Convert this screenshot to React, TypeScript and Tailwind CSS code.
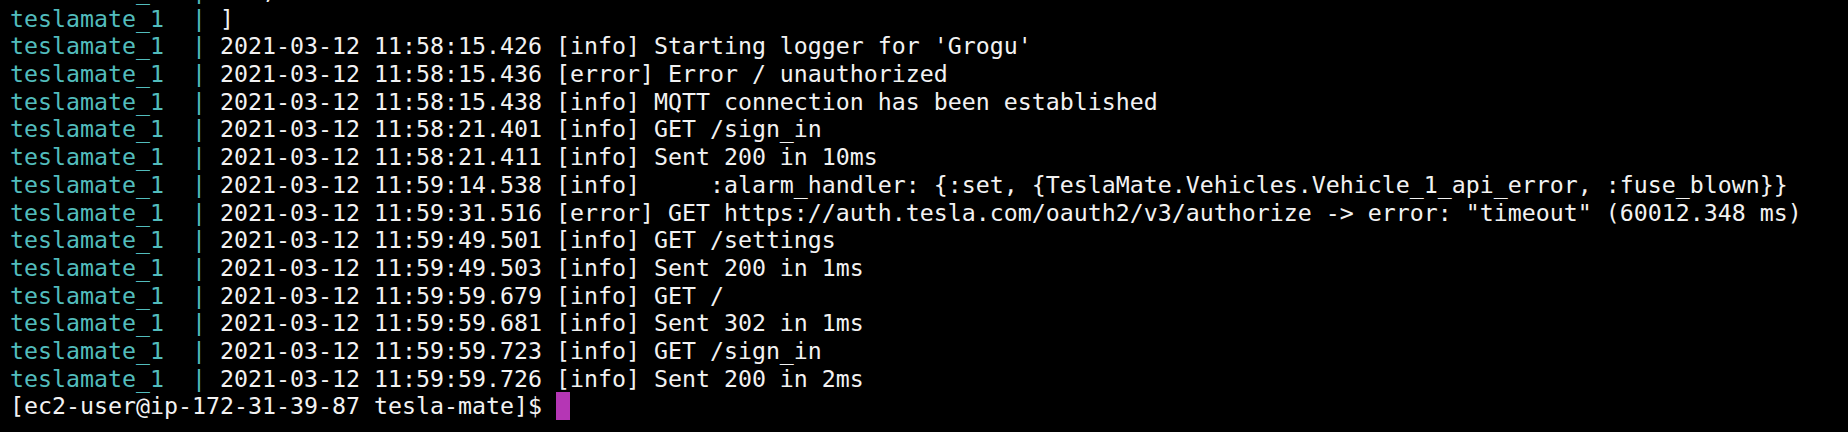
import React from "react";

const rows: string[] = [
  "   ,",
  "]",
  "2021-03-12 11:58:15.426 [info] Starting logger for 'Grogu'",
  "2021-03-12 11:58:15.436 [error] Error / unauthorized",
  "2021-03-12 11:58:15.438 [info] MQTT connection has been established",
  "2021-03-12 11:58:21.401 [info] GET /sign_in",
  "2021-03-12 11:58:21.411 [info] Sent 200 in 10ms",
  "2021-03-12 11:59:14.538 [info]     :alarm_handler: {:set, {TeslaMate.Vehicles.Vehicle_1_api_error, :fuse_blown}}",
  "2021-03-12 11:59:31.516 [error] GET https://auth.tesla.com/oauth2/v3/authorize -> error: \"timeout\" (60012.348 ms)",
  "2021-03-12 11:59:49.501 [info] GET /settings",
  "2021-03-12 11:59:49.503 [info] Sent 200 in 1ms",
  "2021-03-12 11:59:59.679 [info] GET /",
  "2021-03-12 11:59:59.681 [info] Sent 302 in 1ms",
  "2021-03-12 11:59:59.723 [info] GET /sign_in",
  "2021-03-12 11:59:59.726 [info] Sent 200 in 2ms",
];

export default function App() {
  return (
    <div className="w-[1848px] h-[432px] bg-black overflow-hidden">
      <div
        className="mt-[-23px] pl-[10px] text-[23.25px] leading-[27.7px] text-[#f2f2f2] whitespace-pre"
        style={{ fontFamily: '"DejaVu Sans Mono", "Liberation Mono", monospace' }}
      >
        {rows.map((r, i) => (
          <div key={i} className="h-[27.7px]">
            <span className="text-[#52bcbc]">teslamate_1  |</span>
            {" " + r}
          </div>
        ))}
        <div className="h-[27.7px] flex items-center">
          <span>[ec2-user@ip-172-31-39-87 tesla-mate]$ </span>
          <span className="inline-block w-[14px] h-[28px] bg-[#b536b5]" />
        </div>
      </div>
    </div>
  );
}
